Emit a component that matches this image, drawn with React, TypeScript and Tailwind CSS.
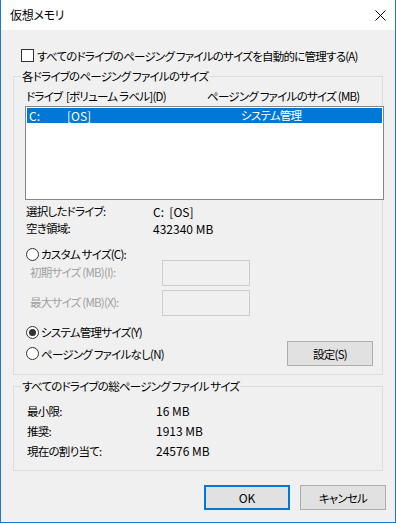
import React from "react";

const font = "font-['Noto_Sans_CJK_JP','Noto_Sans',sans-serif] [font-feature-settings:'palt']";
const num = "text-[12px] tracking-normal";

function Radio({ checked }: { checked?: boolean }) {
  return (
    <span className="w-[13px] h-[13px] rounded-full border border-[#333333] bg-white flex items-center justify-center shrink-0">
      {checked && <span className="w-[7px] h-[7px] rounded-full bg-[#333333]" />}
    </span>
  );
}

function GroupLabel({ children }: { children: React.ReactNode }) {
  return (
    <span className="absolute left-[7px] top-[-9px] px-[1px] bg-[#f0f0f0] leading-[16px] text-black whitespace-nowrap">
      {children}
    </span>
  );
}

export default function App() {
  return (
    <div
      className={`${font} text-[11.5px] tracking-[-0.75px] text-black w-[396px] h-[523px] bg-[#f0f0f0] border-l border-r border-b border-[#1979ca] flex flex-col overflow-hidden`}
    >
      {/* Title bar */}
      <div className="h-[30px] bg-white flex items-center justify-between pl-[9px] pr-[9px] shrink-0">
        <span className="leading-[16px] text-[12px] tracking-[-0.3px]">仮想メモリ</span>
        <svg width="11" height="11" viewBox="0 0 11 11" className="shrink-0">
          <path d="M0.5 0.5 L10.5 10.5 M10.5 0.5 L0.5 10.5" stroke="#000" strokeWidth="1" fill="none" />
        </svg>
      </div>

      {/* Checkbox */}
      <div className="mt-[19px] pl-[20px] h-[13px] flex items-center gap-[3px]">
        <span className="w-[13px] h-[13px] border border-[#333333] bg-white shrink-0" />
        <span className="leading-[16px] whitespace-nowrap">すべてのドライブのページング&nbsp;ファイルのサイズを自動的に管理する(A)</span>
      </div>

      {/* Group 1 */}
      <div className="relative mt-[14px] ml-[12px] w-[370px] h-[299px] border border-[#dcdcdc] flex flex-col">
        <GroupLabel>各ドライブのページング&nbsp;ファイルのサイズ</GroupLabel>

        <div className="mt-[11px] h-[16px] leading-[16px] flex whitespace-nowrap">
          <span className="pl-[12px] w-[193px]">ドライブ&nbsp;&nbsp;[ボリューム&nbsp;ラベル](D)</span>
          <span>ページング&nbsp;ファイルのサイズ (MB)</span>
        </div>

        <div className="mt-[2px] ml-[11px] w-[359px] h-[94px] border border-[#828790] bg-white p-[1px] shrink-0">
          <div className="h-[15px] bg-[#0078d7] text-white leading-[15px] flex whitespace-nowrap">
            <span className={`pl-[2px] w-[40px] ${num}`}>C:</span>
            <span className={`w-[174px] ${num}`}>[OS]</span>
            <span>システム管理</span>
          </div>
        </div>

        <div className="mt-[3px] pl-[12px] grid grid-cols-[127px_1fr] leading-[17px]">
          <span>選択したドライブ:</span>
          <span className={num}>C:&nbsp; [OS]</span>
          <span>空き領域:</span>
          <span className={num}>432340 MB</span>
        </div>

        <div className="mt-[11px] ml-[12px] h-[12px] flex items-center gap-[2px]">
          <Radio />
          <span className="leading-[16px] whitespace-nowrap">カスタム&nbsp;サイズ(C):</span>
        </div>

        <div className="h-[26px] flex items-center ml-[16px] text-[#a0a0a0]">
          <span className="w-[132px] whitespace-nowrap">初期サイズ (MB)(I):</span>
          <span className="w-[88px] h-[26px] border border-[#cccccc] bg-[#f0f0f0]" />
        </div>
        <div className="mt-[4px] h-[26px] flex items-center ml-[16px] text-[#a0a0a0]">
          <span className="w-[132px] whitespace-nowrap">最大サイズ (MB)(X):</span>
          <span className="w-[88px] h-[26px] border border-[#cccccc] bg-[#f0f0f0]" />
        </div>

        <div className="mt-[8px] ml-[12px] h-[16px] flex items-center gap-[2px]">
          <Radio checked />
          <span className="leading-[16px] whitespace-nowrap">システム管理サイズ(Y)</span>
        </div>

        <div className="mt-[1px] ml-[12px] mr-[9px] h-[25px] flex items-center justify-between">
          <div className="flex items-center gap-[2px]">
            <Radio />
            <span className="leading-[16px] whitespace-nowrap">ページング&nbsp;ファイルなし(N)</span>
          </div>
          <button className="w-[86px] h-[25px] bg-[#e1e1e1] border border-[#adadad] leading-[16px]">
            設定(S)
          </button>
        </div>
      </div>

      {/* Group 2 */}
      <div className="relative mt-[11px] ml-[12px] w-[370px] h-[85px] border border-[#dcdcdc]">
        <GroupLabel>すべてのドライブの総ページング&nbsp;ファイル&nbsp;サイズ</GroupLabel>
        <div className="mt-[14px] pl-[13px] grid grid-cols-[129px_1fr] leading-[20px]">
          <span>最小限:</span>
          <span className={num}>16 MB</span>
          <span>推奨:</span>
          <span className={num}>1913 MB</span>
          <span>現在の割り当て:</span>
          <span className={num}>24576 MB</span>
        </div>
      </div>

      {/* Buttons */}
      <div className="mt-[14px] pr-[9px] flex justify-end gap-[10px]">
        <button className={`w-[86px] h-[25px] bg-[#e1e1e1] border-2 border-[#0078d7] leading-[16px] ${num}`}>OK</button>
        <button className="w-[86px] h-[25px] bg-[#e1e1e1] border border-[#adadad] leading-[16px]">キャンセル</button>
      </div>
    </div>
  );
}
